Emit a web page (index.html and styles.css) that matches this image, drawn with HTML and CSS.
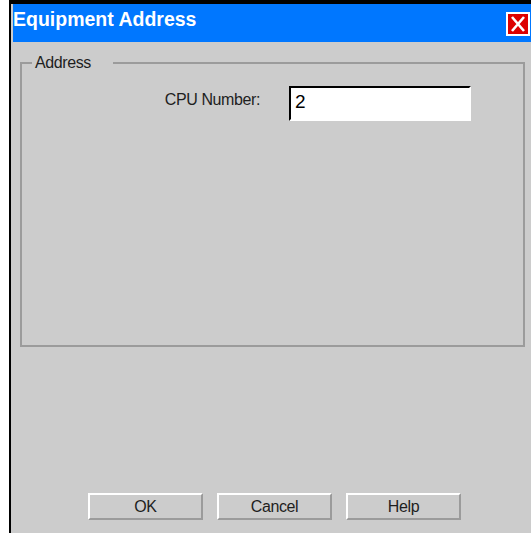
FILE: index.html
```html
<!DOCTYPE html>
<html lang="en">
<head>
<meta charset="utf-8">
<title>Equipment Address</title>
<link rel="stylesheet" href="styles.css">
</head>
<body>
  <div class="window">
    <div class="titlebar">
      <span class="title">Equipment Address</span>
      <span class="close" aria-label="Close">
        <svg width="20" height="20" viewBox="0 0 20 20">
          <path d="M4 3 L16 17 M16 3 L4 17" stroke="#fff" stroke-width="2.6" fill="none"/>
        </svg>
      </span>
    </div>

    <fieldset class="group">
      <legend class="group-label">Address</legend>
      <div class="field-row">
        <label class="field-label">CPU Number:</label>
        <div class="field-input">2</div>
      </div>
    </fieldset>

    <div class="actions">
      <button class="btn">OK</button>
      <button class="btn">Cancel</button>
      <button class="btn">Help</button>
    </div>
  </div>
</body>
</html>
```

FILE: styles.css
```css
html, body {
  margin: 0;
  padding: 0;
  background: #fff;
  overflow: hidden;
}

body {
  font-family: "Liberation Sans", Arial, sans-serif;
  color: #1e1e1e;
}

.window {
  margin-left: 9px;
  width: 520px;
  height: 529px;
  background: #cccccc;
  border-top: 4px solid #000;
  border-left: 2px solid #000;
}

.titlebar {
  margin-left: 2px;
  height: 38px;
  background: #0077ff;
  display: flex;
  justify-content: space-between;
  align-items: flex-start;
}

.title {
  padding-top: 4px;
  font-size: 19.5px;
  line-height: 22px;
  font-weight: bold;
  color: #fff;
}

.close {
  margin-top: 8px;
  margin-right: 1px;
  width: 20px;
  height: 20px;
  border: 2px solid #fff;
  background: #dd0000;
  display: flex;
}

.group {
  margin: 12px 0 0 9px;
  padding: 0;
  width: 505px;
  height: 293px;
  box-sizing: border-box;
  border: 2px solid #9b9b9b;
  min-width: 0;
}

.group-label {
  margin-left: 10px;
  padding: 0 22px 0 3px;
  font-size: 16px;
  line-height: 18px;
  letter-spacing: -0.4px;
}

.field-row {
  display: flex;
  align-items: flex-start;
  gap: 29px;
  margin-top: 14px;
}

.field-label {
  width: 238px;
  text-align: right;
  margin-top: 5px;
  font-size: 16px;
  line-height: 18px;
  letter-spacing: -0.4px;
}

.field-input {
  width: 182px;
  height: 35px;
  box-sizing: border-box;
  background: #fff;
  border: 2px solid;
  border-color: #000 #fff #fff #000;
  padding: 3px 4px 0 4px;
  font-size: 19px;
  line-height: 22px;
  color: #000;
}

.actions {
  display: flex;
  gap: 14px;
  margin-top: 146px;
  padding-left: 77px;
}

.btn {
  width: 115px;
  height: 27px;
  box-sizing: border-box;
  padding: 3px 0 0 0;
  background: #cccccc;
  border: 2px solid;
  border-color: #fff #9b9b9b #9b9b9b #fff;
  font-family: "Liberation Sans", Arial, sans-serif;
  font-size: 16px;
  line-height: 18px;
  letter-spacing: -0.4px;
  color: #1e1e1e;
  display: flex;
  justify-content: center;
  align-items: flex-start;
}
```
